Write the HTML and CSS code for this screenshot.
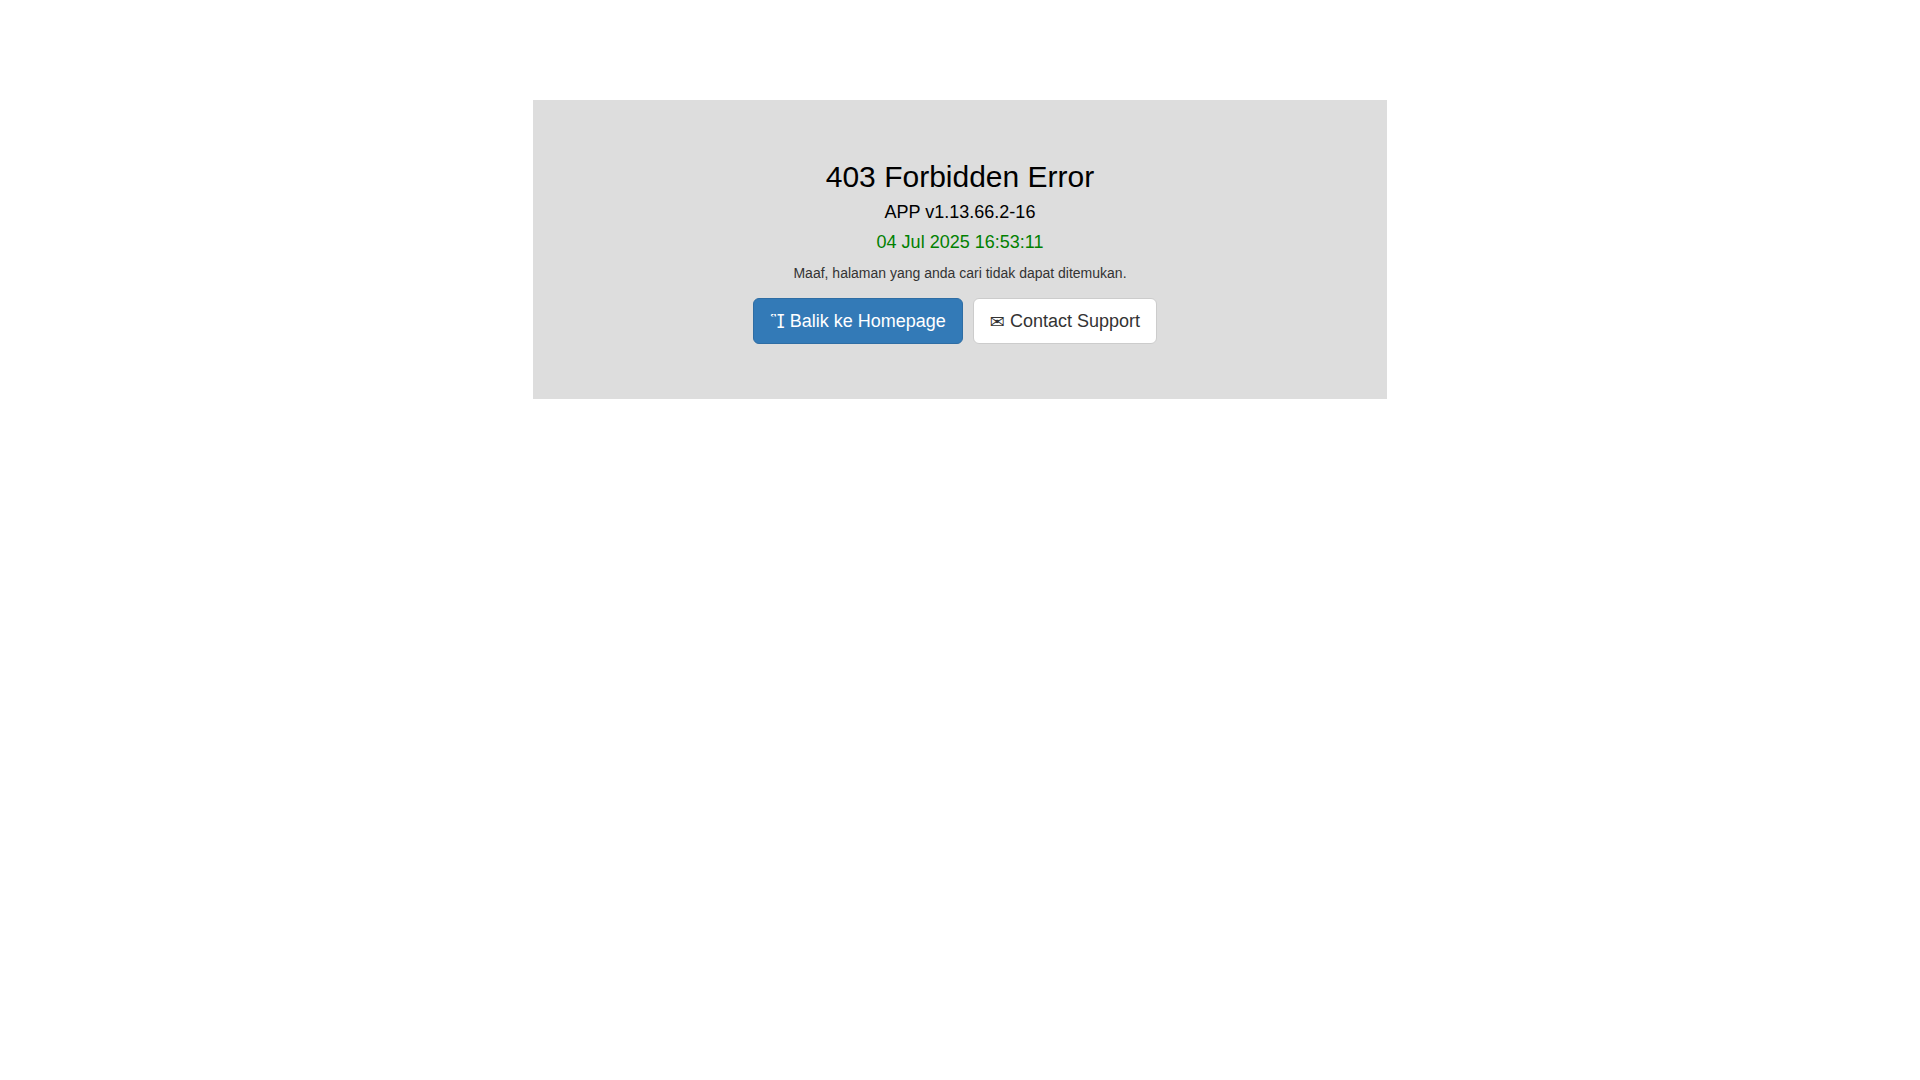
FILE: index.html
```
<!DOCTYPE html>
<html lang="id">
<head>
    <meta charset="UTF-8">
    <meta name="viewport" content="width=device-width, initial-scale=1.0">
    <title>403 Forbidden Error</title>
    <link rel="stylesheet" href="styles.css">
</head>
<body>
    <div class="container">
        <div class="error-template">
            <h2>403 Forbidden Error</h2>
            <h4>APP v1.13.66.2-16</h4>
            <h4 class="error-time">04 Jul 2025 16:53:11</h4>
            <div class="error-details">Maaf, halaman yang anda cari tidak dapat ditemukan.</div>
            <div class="error-actions">
                <a href="#" class="btn btn-primary"><span class="icon" aria-hidden="true">&#xe021;</span> Balik ke Homepage</a>
                <a href="#" class="btn btn-default"><span class="icon" aria-hidden="true">&#x2709;</span> Contact Support</a>
            </div>
        </div>
    </div>
</body>
</html>
```

FILE: styles.css
```
* {
    box-sizing: border-box;
}

body {
    font-family: "Helvetica Neue", Helvetica, "Liberation Sans", Arial, sans-serif;
    font-size: 14px;
    line-height: 20px;
    margin: 0;
    color: #333;
    background: #fff;
}

.container {
    max-width: 854px;
    margin: 100px auto 0;
}

.error-template {
    padding: 40px 15px;
    text-align: center;
    background: #ddd;
}

h2,
h4 {
    font-weight: 500;
    line-height: 1.1;
    color: #000;
}

h2 {
    font-size: 30px;
    margin: 20px 0 10px;
}

h4 {
    font-size: 18px;
    margin: 10px 0;
}

.error-time {
    color: green;
}

.error-actions {
    display: flex;
    flex-wrap: wrap;
    justify-content: center;
    margin: 15px 0;
}

.btn {
    padding: 10px 16px;
    margin-right: 10px;
    border: 1px solid transparent;
    border-radius: 6px;
    font-size: 18px;
    line-height: 24px;
    text-decoration: none;
    white-space: nowrap;
}

.btn-primary {
    color: #fff;
    background: #337ab7;
    border-color: #2e6da4;
}

.btn-primary:hover {
    background: #286090;
}

.btn-default {
    color: #333;
    background: #fff;
    border-color: #ccc;
}

.btn-default:hover {
    background: #e6e6e6;
}

.icon {
    display: inline-block;
    position: relative;
    top: 1px;
    font-family: Inter, "DejaVu Sans", sans-serif;
    line-height: 1;
}
```
